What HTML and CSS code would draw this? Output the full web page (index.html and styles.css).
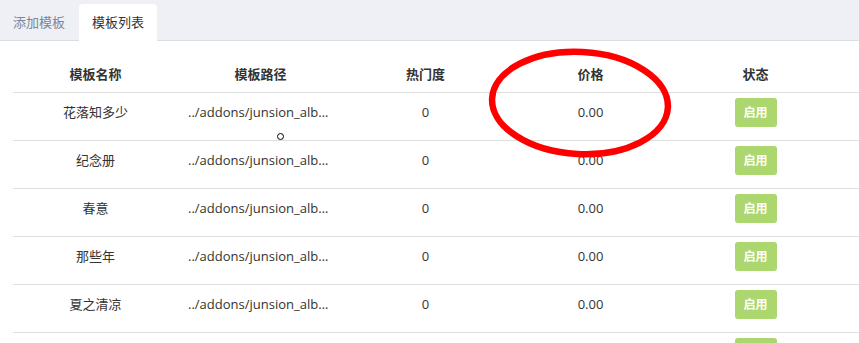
FILE: index.html
```html
<!DOCTYPE html>
<html lang="zh-CN">
<head>
  <meta charset="UTF-8">
  <title>模板列表</title>
  <link rel="stylesheet" href="styles.css">
</head>
<body>
  <!-- Tabs -->
  <div class="tabs">
    <a class="tab" href="#">添加模板</a>
    <a class="tab active" href="#">模板列表</a>
  </div>

  <div class="content">
    <table class="list">
      <thead>
        <tr>
          <th>模板名称</th>
          <th>模板路径</th>
          <th>热门度</th>
          <th>价格</th>
          <th>状态</th>
          <th class="extra"></th>
        </tr>
      </thead>
      <tbody>
        <tr>
          <td>花落知多少</td>
          <td class="path">../addons/junsion_album/template/mobile/1</td>
          <td>0</td>
          <td>0.00</td>
          <td><span class="btn">启用</span></td>
          <td class="extra"></td>
        </tr>
        <tr>
          <td>纪念册</td>
          <td class="path">../addons/junsion_album/template/mobile/2</td>
          <td>0</td>
          <td>0.00</td>
          <td><span class="btn">启用</span></td>
          <td class="extra"></td>
        </tr>
        <tr>
          <td>春意</td>
          <td class="path">../addons/junsion_album/template/mobile/3</td>
          <td>0</td>
          <td>0.00</td>
          <td><span class="btn">启用</span></td>
          <td class="extra"></td>
        </tr>
        <tr>
          <td>那些年</td>
          <td class="path">../addons/junsion_album/template/mobile/4</td>
          <td>0</td>
          <td>0.00</td>
          <td><span class="btn">启用</span></td>
          <td class="extra"></td>
        </tr>
        <tr>
          <td>夏之清凉</td>
          <td class="path">../addons/junsion_album/template/mobile/5</td>
          <td>0</td>
          <td>0.00</td>
          <td><span class="btn">启用</span></td>
          <td class="extra"></td>
        </tr>
        <tr>
          <td>秋语</td>
          <td class="path">../addons/junsion_album/template/mobile/6</td>
          <td>0</td>
          <td>0.00</td>
          <td><span class="btn">启用</span></td>
          <td class="extra"></td>
        </tr>
      </tbody>
    </table>

    <!-- hand drawn mark round the price column -->
    <svg class="mark" width="200" height="120" viewBox="0 0 200 120">
      <ellipse cx="100" cy="60" rx="88" ry="51" fill="none" stroke="#f00" stroke-width="6.5" transform="rotate(3 100 60)"/>
    </svg>

    <span class="cursor"></span>
  </div>
</body>
</html>
```

FILE: styles.css
```css
* {
  margin: 0;
  padding: 0;
  box-sizing: border-box;
}

html, body {
  height: 100%;
  overflow: hidden;
}

body {
  background: #fff;
  font-family: "Open Sans", "Noto Sans CJK SC", sans-serif;
  font-size: 13px;
  color: #333;
}

/* Tabs */
.tabs {
  display: flex;
  align-items: flex-end;
  height: 41px;
  background: #eff0f5;
  border-bottom: 1px solid #ddd;
}

.tab {
  display: block;
  height: 36px;
  line-height: 36px;
  padding: 0 13px;
  margin-right: 1px;
  color: #7a869c;
  text-decoration: none;
  border-radius: 4px 4px 0 0;
}

.tab.active {
  background: #fff;
  color: #333;
  margin-bottom: -1px;
  height: 37px;
}

/* Table */
.content {
  position: relative;
  padding-left: 13px;
  overflow: hidden;
}

.list {
  border-collapse: collapse;
  table-layout: fixed;
  width: 990px;
}

.list th,
.list td {
  width: 165px;
  text-align: center;
  padding: 0 10px;
}

.list th {
  height: 51px;
  padding-top: 14px;
  font-weight: bold;
  border-bottom: 1px solid #ddd;
}

.list td {
  height: 48px;
  padding-top: 5px;
  padding-bottom: 13px;
  line-height: 29px;
  vertical-align: top;
  border-bottom: 1px solid #ddd;
}

.list td.path {
  white-space: nowrap;
  overflow: hidden;
  text-overflow: ellipsis;
  text-align: left;
}

.btn {
  display: inline-block;
  width: 42px;
  height: 29px;
  line-height: 29px;
  background: #acd66e;
  color: #fff;
  font-size: 12px;
  font-weight: bold;
  border-radius: 3px;
  vertical-align: top;
}

/* Overlays */
.mark {
  position: absolute;
  left: 480px;
  top: 2px;
}

.cursor {
  position: absolute;
  left: 277px;
  top: 92px;
  width: 7px;
  height: 7px;
  border: 1.5px solid #000;
  border-radius: 50%;
  background: #fff;
}
```
